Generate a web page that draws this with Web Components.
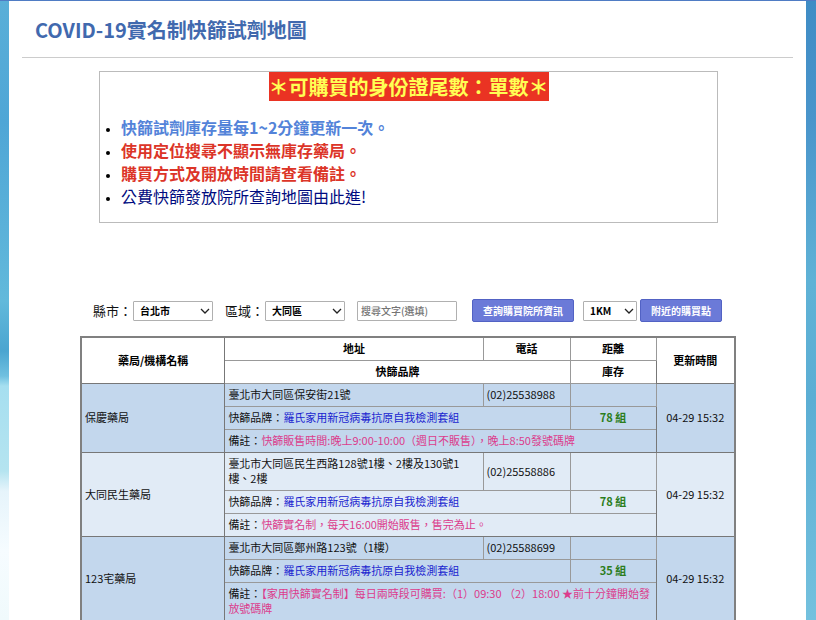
<!DOCTYPE html>
<html lang="zh-Hant">
<head>
<meta charset="utf-8">
<meta name="viewport" content="width=device-width, initial-scale=1">
<title>COVID-19實名制快篩試劑地圖</title>
<style>
  body {
    margin: 0;
    font-family: "Noto Sans CJK TC", sans-serif;
    color: #111;
  }
</style>
</head>
<body>
<map-page>
  <span slot="title">COVID-19實名制快篩試劑地圖</span>
  <notice-box>
    <span slot="headline">＊可購買的身份證尾數：單數＊</span>
    <notice-item kind="info">快篩試劑庫存量每1~2分鐘更新一次。</notice-item>
    <notice-item kind="warn">使用定位搜尋不顯示無庫存藥局。</notice-item>
    <notice-item kind="warn">購買方式及開放時間請查看備註。</notice-item>
    <notice-item kind="link" href="#clinics">公費快篩發放院所查詢地圖由此進!</notice-item>
  </notice-box>
  <search-bar></search-bar>
  <stock-table></stock-table>
</map-page>

<script>
class MapPage extends HTMLElement {
  constructor() {
    super();
    this.attachShadow({ mode: "open" });
  }

  static get styles() {
    return /* css */`
      :host {
        display: block;
        box-sizing: border-box;
        height: 100vh;
        overflow-y: auto;
        scrollbar-width: none;
        padding: 0 10px 0 9px;
        border-top: 1px solid #4f7cc4;
        background:
          linear-gradient(#5aafd8 0, #4fa6d6 120px, #62b9db 300px, #4ba5d0 350px, #6fc0e0 375px, #a6dff0 385px, #b5e4f0 470px, #e6f4fb 490px, #f6fcff 550px, #f0fafc 100%) left / 9px 100% no-repeat,
          linear-gradient(#3f8cc5 0, #4a95cb 120px, #5fb2d6 280px, #5caed4 400px, #74c1de 100%) right / 10px 100% no-repeat,
          #fff;
      }

      main {
        min-height: 100%;
        padding: 0 13px;
        background: #fff;
      }

      h1 {
        margin: 0;
        padding: 14px 13px 12px;
        border-bottom: 1px solid #ccc;
        font-size: 20px;
        line-height: 30px;
        color: #4169ae;
      }
    `;
  }

  connectedCallback() {
    this.shadowRoot.innerHTML = /* html */`
    <style>${MapPage.styles}</style>
    <main>
      <h1><slot name="title"></slot></h1>
      <slot></slot>
    </main>
    `;
  }
}

class NoticeBox extends HTMLElement {
  constructor() {
    super();
    this.attachShadow({ mode: "open" });
  }

  static get styles() {
    return /* css */`
      :host {
        display: block;
        margin: 13px 75px 0 77px;
        padding-bottom: 14px;
        border: 1px solid #bbb;
      }

      .headline {
        width: fit-content;
        margin: 0 auto 15px;
        background: #ea3323;
        color: #ffff54;
        font-size: 20px;
        font-weight: bold;
        line-height: 29px;
      }

      .list {
        padding-left: 21px;
      }
    `;
  }

  connectedCallback() {
    this.shadowRoot.innerHTML = /* html */`
    <style>${NoticeBox.styles}</style>
    <div class="headline"><slot name="headline"></slot></div>
    <div class="list" role="list"><slot></slot></div>
    `;
  }
}

class NoticeItem extends HTMLElement {
  constructor() {
    super();
    this.attachShadow({ mode: "open" });
  }

  static get styles() {
    return /* css */`
      :host {
        display: block;
        font-size: 16px;
        line-height: 23px;
      }

      .item {
        display: list-item;
        list-style: disc;
      }

      .item::marker {
        color: #000;
        font-size: 11px;
      }

      .info { color: #5383d9; font-weight: bold; }
      .warn { color: #dc3528; font-weight: bold; }

      a {
        color: #000b80;
        text-decoration: none;
      }
    `;
  }

  connectedCallback() {
    this.setAttribute("role", "listitem");
    const href = this.getAttribute("href");
    const kind = this.getAttribute("kind") ?? "info";
    this.shadowRoot.innerHTML = /* html */`
    <style>${NoticeItem.styles}</style>
    <div class="item ${kind}">${href ? `<a href="${href}"><slot></slot></a>` : "<slot></slot>"}</div>
    `;
  }
}

class SearchBar extends HTMLElement {
  constructor() {
    super();
    this.attachShadow({ mode: "open" });
  }

  static get styles() {
    return /* css */`
      :host {
        display: block;
        margin: 76px 71px 0;
      }

      form {
        display: flex;
        align-items: center;
        gap: 12px;
      }

      label, .near {
        display: flex;
        align-items: center;
        flex: none;
        white-space: nowrap;
      }

      label {
        gap: 1px;
        font-size: 13px;
        line-height: 20px;
      }

      .near {
        gap: 3px;
        margin-left: -3px;
      }

      .picker {
        display: grid;
        align-items: center;
      }

      .picker > * {
        grid-area: 1 / 1;
      }

      .picker svg {
        justify-self: end;
        margin-right: 3px;
        pointer-events: none;
      }

      select, input, button {
        box-sizing: border-box;
        flex: none;
        margin: 0;
        font-family: inherit;
        font-size: 10px;
      }

      select, input {
        height: 20px;
        border: 1px solid #b0b0b0;
        border-radius: 1px;
        background: #fff;
      }

      select {
        appearance: none;
        width: 80px;
        padding: 0 6px;
        font-weight: bold;
        color: #000;
      }

      select.short {
        width: 54px;
      }

      input {
        width: 100px;
        padding: 0 3px;
        font-weight: 500;
      }

      input::placeholder {
        color: #757575;
      }

      button {
        height: 23px;
        padding: 0 10px;
        border: 1px solid #5262c4;
        border-radius: 2px;
        background: #6b7ad8;
        color: #fff;
        font-weight: bold;
        white-space: nowrap;
      }

      .query {
        margin-left: 3px;
      }
    `;
  }

  picker(name, value, className = "") {
    return /* html */`
    <span class="picker">
      <select name="${name}" class="${className}" aria-label="${name}"><option>${value}</option></select>
      <svg width="10" height="6" viewBox="0 0 10 6" fill="none" stroke="#222" stroke-width="1.3"><path d="M1 1l4 4 4-4"/></svg>
    </span>`;
  }

  connectedCallback() {
    this.shadowRoot.innerHTML = /* html */`
    <style>${SearchBar.styles}</style>
    <form>
      <label>縣市：${this.picker("city", "台北市")}</label>
      <label>區域：${this.picker("district", "大同區")}</label>
      <input type="text" name="keyword" placeholder="搜尋文字(選填)" aria-label="搜尋文字">
      <button type="button" class="query">查詢購買院所資訊</button>
      <span class="near">
        ${this.picker("range", "1KM", "short")}
        <button type="button">附近的購買點</button>
      </span>
    </form>
    `;
  }
}

class StockTable extends HTMLElement {
  constructor() {
    super();
    this.attachShadow({ mode: "open" });
    this.brand = "羅氏家用新冠病毒抗原自我檢測套組";
    this.shops = [
      {
        name: "保慶藥局",
        address: "臺北市大同區保安街21號",
        phone: "(02)25538988",
        stock: 78,
        note: "快篩販售時間:晚上9:00-10:00（週日不販售），晚上8:50發號碼牌",
        time: "04-29 15:32"
      },
      {
        name: "大同民生藥局",
        address: "臺北市大同區民生西路128號1樓、2樓及130號1樓、2樓",
        phone: "(02)25558886",
        stock: 78,
        note: "快篩實名制，每天16:00開始販售，售完為止。",
        time: "04-29 15:32"
      },
      {
        name: "123宅藥局",
        address: "臺北市大同區鄭州路123號（1樓）",
        phone: "(02)25588699",
        stock: 35,
        note: "【家用快篩實名制】每日兩時段可購買:（1）09:30 （2）18:00 ★前十分鐘開始發放號碼牌",
        time: "04-29 15:32"
      }
    ];
  }

  static get styles() {
    return /* css */`
      :host {
        display: block;
        margin: 14px 57px 0 58px;
      }

      table {
        width: 100%;
        table-layout: fixed;
        border-collapse: collapse;
        border: 2px solid #808080;
        font-size: 11px;
        line-height: 15px;
      }

      .name { width: 22%; }
      .phone { width: 87px; }
      .distance { width: 86px; }
      .time { width: 79px; }

      th, td {
        height: 15px;
        padding: 3px 3px 4px;
        border: 1px solid #999;
      }

      th { color: #000; }
      td { text-align: left; }

      tbody:nth-of-type(odd) { background: #c3d7ed; }
      tbody:nth-of-type(even) { background: #e1ebf6; }
      tbody tr:first-child td { border-top-color: #777; }
      tbody tr:last-child td { border-bottom-color: #777; }

      [rowspan] { border-color: #777; }

      .brand { color: #1a1fd0; }
      .note { color: #dc3c8c; }

      .stock {
        color: #2c7d1c;
        font-weight: bold;
      }

      .stock, .updated { text-align: center; }
    `;
  }

  row(shop) {
    return /* html */`
    <tbody>
      <tr>
        <td rowspan="3">${shop.name}</td>
        <td>${shop.address}</td>
        <td>${shop.phone}</td>
        <td></td>
        <td rowspan="3" class="updated">${shop.time}</td>
      </tr>
      <tr>
        <td colspan="2">快篩品牌：<span class="brand">${this.brand}</span></td>
        <td class="stock">${shop.stock} 組</td>
      </tr>
      <tr>
        <td colspan="3">備註：<span class="note">${shop.note}</span></td>
      </tr>
    </tbody>`;
  }

  connectedCallback() {
    this.shadowRoot.innerHTML = /* html */`
    <style>${StockTable.styles}</style>
    <table>
      <colgroup>
        <col class="name"><col><col class="phone"><col class="distance"><col class="time">
      </colgroup>
      <thead>
        <tr>
          <th rowspan="2">藥局/機構名稱</th>
          <th>地址</th>
          <th>電話</th>
          <th>距離</th>
          <th rowspan="2">更新時間</th>
        </tr>
        <tr>
          <th colspan="2">快篩品牌</th>
          <th>庫存</th>
        </tr>
      </thead>
      ${this.shops.map(shop => this.row(shop)).join("")}
      <tbody>
        <tr><td></td><td></td><td></td><td></td><td></td></tr>
      </tbody>
    </table>
    `;
  }
}

customElements.define("map-page", MapPage);
customElements.define("notice-box", NoticeBox);
customElements.define("notice-item", NoticeItem);
customElements.define("search-bar", SearchBar);
customElements.define("stock-table", StockTable);
</script>
</body>
</html>
